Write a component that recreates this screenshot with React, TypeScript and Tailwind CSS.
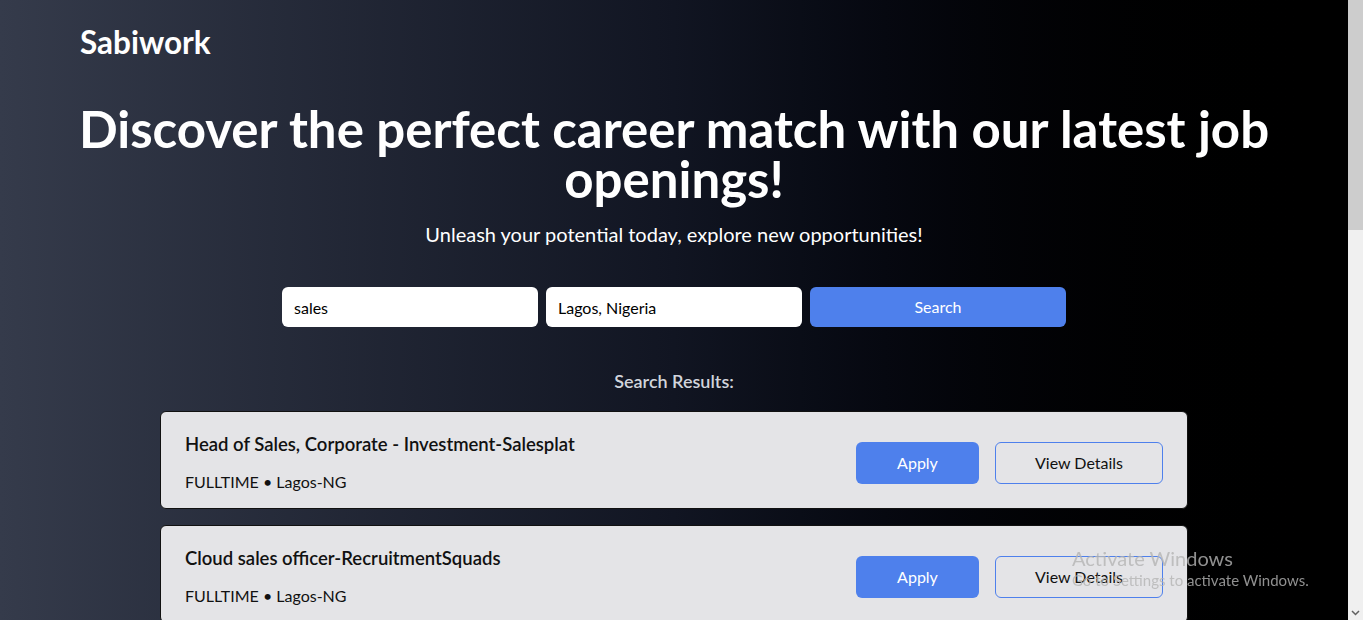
import { FC } from "react";

type Job = {
    title: string;
    type: string;
    location: string;
};

const jobs: Job[] = [
    { title: "Head of Sales, Corporate - Investment-Salesplat", type: "FULLTIME", location: "Lagos-NG" },
    { title: "Cloud sales officer-RecruitmentSquads", type: "FULLTIME", location: "Lagos-NG" },
    { title: "Sales Executive-Jobberman", type: "FULLTIME", location: "Lagos-NG" },
];

const JobCard: FC<{ job: Job }> = ({ job }) => {
    return (
        <div className="flex items-center justify-between bg-[#e4e4e7] border border-[#111] rounded-md pl-6 pr-6 pt-5 pb-[14px]">
            <div className="flex flex-col">
                <h3 className="text-[18.5px] leading-6 font-semibold text-[#111]">{job.title}</h3>
                <p className="mt-[14px] text-base leading-6 text-[#111]">
                    {job.type} • {job.location}
                </p>
            </div>
            <div className="flex items-center gap-4">
                <button className="w-[123px] h-[42px] rounded-md bg-[#4e80ec] text-white text-base">Apply</button>
                <button className="w-[168px] h-[42px] rounded-md border border-[#4e80ec] text-[#111] text-base">
                    View Details
                </button>
            </div>
        </div>
    );
};

const App: FC = () => {
    return (
        <div className="flex h-screen overflow-hidden" style={{ fontFamily: 'Lato, "Noto Sans", sans-serif' }}>
            <main className="flex-1 min-h-screen bg-gradient-to-r from-[#353b4b] via-[#111522] to-black text-white">
                <header className="px-20 pt-[22px]">
                    <h1 className="text-[31.5px] leading-10 font-bold">Sabiwork</h1>
                </header>
                <section className="flex flex-col items-center mt-[42px] px-16">
                    <h2 className="text-[51px] leading-[50px] font-bold text-center">
                        Discover the perfect career match with our latest job openings!
                    </h2>
                    <p className="mt-4 text-xl">Unleash your potential today, explore new opportunities!</p>
                    <div className="flex gap-2 mt-[39px]">
                        <input
                            defaultValue="sales"
                            className="w-64 h-10 rounded-md bg-white px-3 text-base text-black outline-none"
                        />
                        <input
                            defaultValue="Lagos, Nigeria"
                            className="w-64 h-10 rounded-md bg-white px-3 text-base text-black outline-none"
                        />
                        <button className="w-64 h-10 rounded-md bg-[#4e80ec] text-white text-base">Search</button>
                    </div>
                    <h4 className="mt-10 text-lg font-semibold text-gray-300">Search Results:</h4>
                    <div className="w-full max-w-[1028px] mt-4 flex flex-col gap-4 pb-10">
                        {jobs.map((job) => (
                            <JobCard key={job.title} job={job} />
                        ))}
                    </div>
                </section>
            </main>
            <aside className="w-[15px] h-screen bg-[#f0f0f0] flex flex-col">
                <div className="h-[230px] bg-[#cdcdcd]" />
                <div className="flex-1" />
                <svg viewBox="0 0 15 15" className="w-[15px] h-[15px]">
                    <path d="M4 6 L7.5 9.5 L11 6" fill="none" stroke="#606060" strokeWidth="1.5" />
                </svg>
            </aside>
            <div className="fixed left-[1072px] bottom-[30px] text-[#b4b4b4]/80 pointer-events-none">
                <p className="text-xl leading-6">Activate Windows</p>
                <p className="text-[15px] leading-5">Go to Settings to activate Windows.</p>
            </div>
        </div>
    );
};

export default App;
